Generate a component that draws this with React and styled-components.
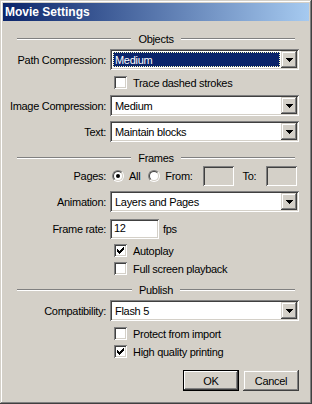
import styled, { createGlobalStyle } from "styled-components";

const GlobalStyle = createGlobalStyle`
  html, body {
    margin: 0;
    padding: 0;
    background: #d4d0c8;
  }
  * {
    box-sizing: border-box;
  }
`;

const raised = `
  box-shadow: inset -1px -1px #404040, inset 1px 1px #d4d0c8,
    inset -2px -2px #808080, inset 2px 2px #ffffff;
`;

const sunken = `
  box-shadow: inset 1px 1px #808080, inset -1px -1px #ffffff,
    inset 2px 2px #404040, inset -2px -2px #d4d0c8;
`;

const Window = styled.div`
  width: 312px;
  height: 404px;
  padding: 3px;
  background: #d4d0c8;
  box-shadow: inset -1px -1px #404040, inset 1px 1px #d4d0c8,
    inset -2px -2px #808080, inset 2px 2px #ffffff;
  display: flex;
  flex-direction: column;
  font-family: "Liberation Sans", Arial, sans-serif;
  font-size: 11px;
  letter-spacing: -0.3px;
  color: #000;
`;

const TitleBar = styled.div`
  height: 18px;
  padding-left: 2px;
  display: flex;
  align-items: center;
  background: linear-gradient(to right, #0a246a, #a6caf0);
  color: #fff;
  font-weight: bold;
  font-size: 12px;
  letter-spacing: 0;
`;

const Body = styled.div`
  display: flex;
  flex-direction: column;
  padding: 12px 10px 0 0;
`;

const SeparatorWrap = styled.div`
  height: 12px;
  margin: ${(p) => p.$top || 0}px 4px 0 14px;
  display: flex;
  align-items: center;
  gap: 7px;
`;

const Line = styled.div`
  flex: 1;
  height: 2px;
  border-top: 1px solid #808080;
  border-bottom: 1px solid #ffffff;
`;

const Separator = ({ title, top }) => (
  <SeparatorWrap $top={top}>
    <Line />
    <span>{title}</span>
    <Line />
  </SeparatorWrap>
);

const Row = styled.div`
  display: grid;
  grid-template-columns: 103px 1fr;
  column-gap: 4px;
  align-items: center;
  margin-top: ${(p) => p.$top || 0}px;
  height: ${(p) => p.$height || 21}px;
`;

const Label = styled.div`
  text-align: right;
  white-space: nowrap;
`;

const SelectBox = styled.div`
  height: 21px;
  padding: 2px;
  display: flex;
  background: #fff;
  ${sunken}
`;

const SelectValue = styled.div`
  flex: 1;
  margin: 1px;
  padding-left: 2px;
  display: flex;
  align-items: center;
  background: ${(p) => (p.$focused ? "#0a246a" : "transparent")};
  color: ${(p) => (p.$focused ? "#fff" : "#000")};
  outline: ${(p) => (p.$focused ? "1px dotted #ffffc0" : "none")};
  outline-offset: -1px;
`;

const DropButton = styled.div`
  width: 16px;
  background: #d4d0c8;
  display: flex;
  align-items: center;
  justify-content: center;
  ${raised}
`;

const Select = ({ value, focused }) => (
  <SelectBox>
    <SelectValue $focused={focused}>{value}</SelectValue>
    <DropButton>
      <svg width="7" height="4" viewBox="0 0 7 4" shapeRendering="crispEdges">
        <path d="M0 0h7v1h-1v1h-1v1h-1v1h-1v-1h-1v-1h-1v-1h-1z" fill="#000" />
      </svg>
    </DropButton>
  </SelectBox>
);

const TextBox = styled.div`
  width: ${(p) => p.$width}px;
  height: 20px;
  padding: 3px 0 0 4px;
  background: ${(p) => (p.$disabled ? "#d4d0c8" : "#fff")};
  ${sunken}
`;

const CheckRow = styled.div`
  display: flex;
  align-items: center;
  gap: 6px;
  height: 13px;
  margin-top: ${(p) => p.$top || 0}px;
  margin-left: 111px;
`;

const CheckBox = styled.span`
  width: 13px;
  height: 13px;
  padding: 3px;
  background: #fff;
  display: inline-flex;
  ${sunken}
`;

const Check = ({ label, checked, top }) => (
  <CheckRow $top={top}>
    <CheckBox>
      {checked && (
        <svg width="7" height="7" viewBox="0 0 7 7" shapeRendering="crispEdges">
          <path
            d="M6 0h1v3h-1v1h-1v1h-1v1h-1v1h-1v-1h-1v-1h-1v-3h1v1h1v1h1v-1h1v-1h1v-1h1z"
            fill="#000"
          />
        </svg>
      )}
    </CheckBox>
    <span>{label}</span>
  </CheckRow>
);

const Controls = styled.div`
  display: flex;
  align-items: center;
`;

const RadioOuter = styled.span`
  width: 12px;
  height: 12px;
  border-radius: 50%;
  border: 1px solid;
  border-color: #808080 #ffffff #ffffff #808080;
  display: inline-flex;
  margin-left: ${(p) => p.$left || 0}px;
`;

const RadioInner = styled.span`
  flex: 1;
  border-radius: 50%;
  border: 1px solid;
  border-color: #404040 #d4d0c8 #d4d0c8 #404040;
  background: #fff;
  display: flex;
  align-items: center;
  justify-content: center;
`;

const Dot = styled.span`
  width: 4px;
  height: 4px;
  border-radius: 50%;
  background: #000;
`;

const Text = styled.span`
  margin-left: ${(p) => p.$left || 0}px;
`;

const Radio = ({ checked, left }) => (
  <RadioOuter $left={left}>
    <RadioInner>{checked && <Dot />}</RadioInner>
  </RadioOuter>
);

const Buttons = styled.div`
  display: flex;
  justify-content: flex-end;
  gap: 4px;
  margin-top: 12px;
`;

const Button = styled.div`
  width: 56px;
  height: 21px;
  display: flex;
  align-items: center;
  justify-content: center;
  background: #d4d0c8;
  ${(p) =>
    p.$default
      ? `box-shadow: inset 0 0 0 1px #000, inset -2px -2px #404040, inset 2px 2px #ffffff, inset -3px -3px #808080;`
      : raised}
`;

const App = () => {
  return (
    <>
      <GlobalStyle />
      <Window>
        <TitleBar>Movie Settings</TitleBar>
        <Body>
          <Separator title="Objects" />
          <Row $top={4}>
            <Label>Path Compression:</Label>
            <Select value="Medium" focused />
          </Row>
          <Check label="Trace dashed strokes" top={6} />
          <Row $top={6}>
            <Label>Image Compression:</Label>
            <Select value="Medium" />
          </Row>
          <Row $top={5}>
            <Label>Text:</Label>
            <Select value="Maintain blocks" />
          </Row>

          <Separator title="Frames" top={10} />
          <Row $top={2} $height={20}>
            <Label>Pages:</Label>
            <Controls>
              <Radio checked left={2} />
              <Text $left={5}>All</Text>
              <Radio left={8} />
              <Text $left={5}>From:</Text>
              <TextBox $width={31} $disabled style={{ marginLeft: 10 }} />
              <Text $left={9}>To:</Text>
              <TextBox $width={31} $disabled style={{ marginLeft: 10 }} />
            </Controls>
          </Row>
          <Row $top={5}>
            <Label>Animation:</Label>
            <Select value="Layers and Pages" />
          </Row>
          <Row $top={7} $height={20}>
            <Label>Frame rate:</Label>
            <Controls>
              <TextBox $width={49}>12</TextBox>
              <Text $left={4}>fps</Text>
            </Controls>
          </Row>
          <Check label="Autoplay" checked top={5} />
          <Check label="Full screen playback" top={5} />

          <Separator title="Publish" top={9} />
          <Row $top={4}>
            <Label>Compatibility:</Label>
            <Select value="Flash 5" />
          </Row>
          <Check label="Protect from import" top={6} />
          <Check label="High quality printing" checked top={5} />

          <Buttons>
            <Button $default>OK</Button>
            <Button>Cancel</Button>
          </Buttons>
        </Body>
      </Window>
    </>
  );
};

export default App;
